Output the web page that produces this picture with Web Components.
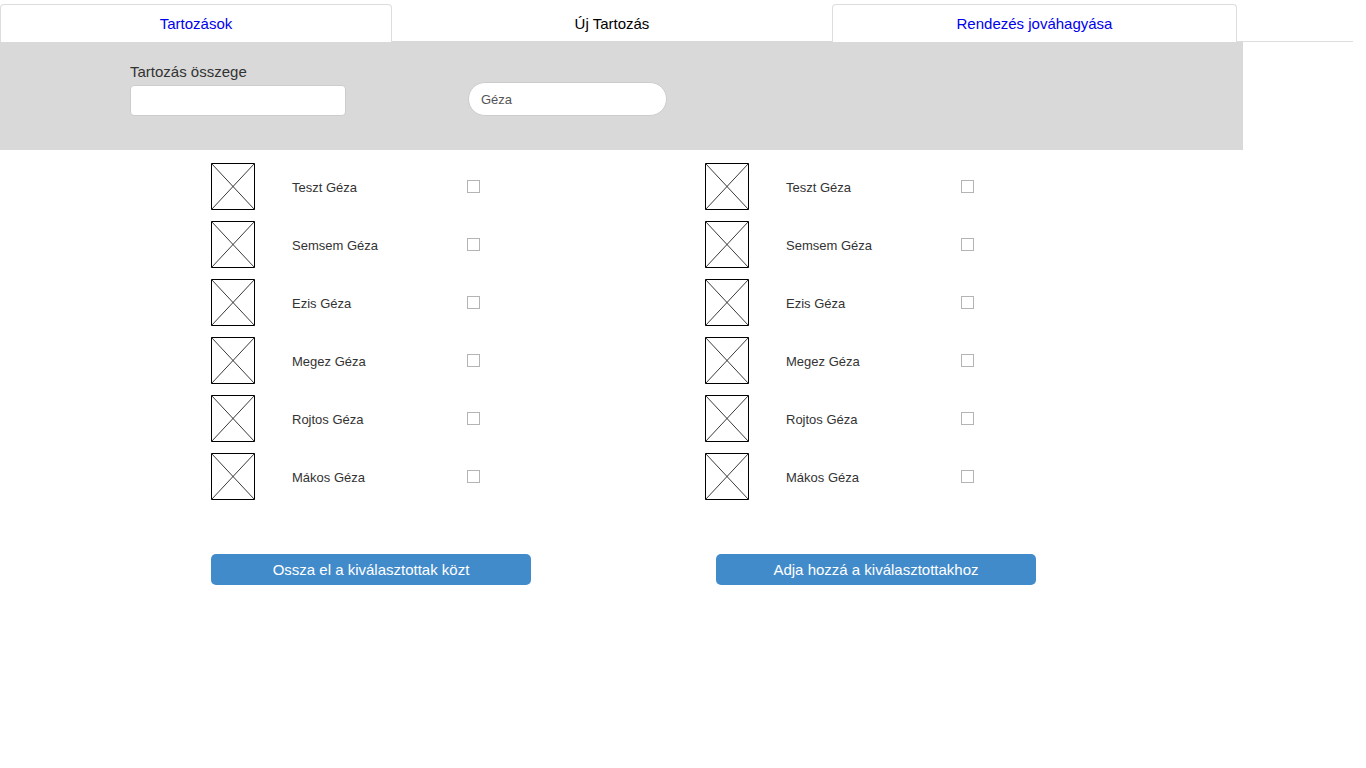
<!DOCTYPE html>
<html lang="hu">
<head>
<meta charset="utf-8">
<title>Új Tartozás</title>
<style>
  body {
    margin: 0;
    background: #fff;
    color: #333;
    font-family: "Liberation Sans", Arial, sans-serif;
    font-size: 15px;
    line-height: 18px;
  }
</style>
</head>
<body>
<debt-page></debt-page>
<script>
  function define(name, html, setup) {
    const template = document.createElement('template');
    template.innerHTML = html;
    customElements.define(name, class extends HTMLElement {
      connectedCallback() {
        if (this.shadowRoot) return;
        const root = this.attachShadow({ mode: 'open' });
        root.append(template.content.cloneNode(true));
        if (setup) setup(this, root);
      }
    });
  }

  define('nav-tab', `
    <style>
      :host { display: block; box-sizing: border-box; height: 38px; }
      :host(:not([current])) {
        border: 1px solid #ddd; border-bottom: 0;
        border-radius: 4px 4px 0 0; background: #fff;
      }
      :host([current]) { border-bottom: 1px solid #d9d9d9; padding-top: 1px; }
      a {
        display: block; padding: 10px 8px 9px; text-align: center;
        color: #00e; text-decoration: none;
      }
      :host([current]) a { color: #000; }
    </style>
    <a href="#"><slot></slot></a>`,
    (host, root) => {
      const link = root.querySelector('a');
      link.href = host.getAttribute('href');
      if (host.hasAttribute('current')) link.setAttribute('aria-current', 'page');
    });

  define('tab-bar', `
    <style>
      :host { display: block; padding: 4px 13px 0 0; }
      nav { display: grid; grid-template-columns: 392fr 440fr 405fr 116fr; }
      .rest { border-bottom: 1px solid #ddd; }
    </style>
    <nav><slot></slot><span class="rest"></span></nav>`);

  define('text-field', `
    <style>
      :host { display: block; width: 216px; }
      label { display: block; margin-bottom: 4px; }
      input {
        display: block; box-sizing: border-box; width: 100%; height: 31px;
        padding: 0 12px; border: 1px solid #ccc; border-radius: 4px;
        background: #fff; color: #333; font: inherit; outline: 0;
      }
    </style>
    <label for="field"><slot></slot></label>
    <input id="field" type="text">`);

  define('search-field', `
    <style>
      :host { display: block; width: 199px; }
      input {
        display: block; box-sizing: border-box; width: 100%; height: 34px;
        padding: 0 12px; border: 1px solid #ccc; border-radius: 17px;
        background: #fff; color: #555; font: inherit; font-size: 13px; outline: 0;
      }
    </style>
    <input type="text" aria-label="Keresés">`,
    (host, root) => { root.querySelector('input').value = host.getAttribute('value') || ''; });

  define('form-band', `
    <style>
      :host {
        display: flex; align-items: flex-end; gap: 122px;
        box-sizing: border-box; width: 91%; height: 108px;
        padding: 0 0 34px 130px; background: #d9d9d9;
      }
    </style>
    <slot></slot>`);

  define('image-placeholder', `
    <style>
      :host { display: block; width: 44px; height: 47px; }
      svg { display: block; }
    </style>
    <svg width="44" height="47" viewBox="0 0 44 47" fill="none" stroke="#000" aria-hidden="true">
      <path d="M.5.5h43v46H.5z"/>
      <path d="M.5.5l43 46M43.5.5l-43 46" stroke="#222" stroke-width=".9"/>
    </svg>`);

  define('person-row', `
    <style>
      :host {
        display: grid; grid-template-columns: 44px 138px 13px;
        column-gap: 37px; align-items: center; font-size: 13px;
      }
      label { padding-top: 2px; }
      input {
        appearance: none; box-sizing: border-box; width: 13px; height: 13px;
        margin: 0; border: 1px solid #b4b4b4; background: #fff;
      }
      input:checked { background: #428bca; }
    </style>
    <image-placeholder></image-placeholder>
    <label for="pick"><slot></slot></label>
    <input id="pick" type="checkbox">`);

  define('person-list', `
    <style>
      :host { display: grid; row-gap: 11px; justify-content: start; }
    </style>
    <slot></slot>`);

  define('action-button', `
    <style>
      :host { display: block; }
      button {
        display: block; width: 100%; height: 31px; padding: 0 12px;
        border: 0; border-radius: 5px; background: #428bca; color: #fff;
        font: inherit; cursor: pointer;
      }
    </style>
    <button type="button"><slot></slot></button>`);

  const people = ['Teszt Géza', 'Semsem Géza', 'Ezis Géza', 'Megez Géza', 'Rojtos Géza', 'Mákos Géza']
    .map(name => `<person-row>${name}</person-row>`).join('');

  define('debt-page', `
    <style>
      :host { display: block; }
      main { padding: 13px 16px 16px 211px; }
      .lists { display: grid; grid-template-columns: 269px 269px; column-gap: 225px; }
      .actions {
        display: grid; grid-template-columns: 320px 320px;
        column-gap: 185px; margin-top: 54px;
      }
    </style>
    <tab-bar>
      <nav-tab href="#tartozasok">Tartozások</nav-tab>
      <nav-tab href="#uj" current>Új Tartozás</nav-tab>
      <nav-tab href="#rendezes">Rendezés jováhagyása</nav-tab>
    </tab-bar>
    <form-band>
      <text-field>Tartozás összege</text-field>
      <search-field value="Géza"></search-field>
    </form-band>
    <main>
      <div class="lists">
        <person-list>${people}</person-list>
        <person-list>${people}</person-list>
      </div>
      <div class="actions">
        <action-button>Ossza el a kiválasztottak közt</action-button>
        <action-button>Adja hozzá a kiválasztottakhoz</action-button>
      </div>
    </main>`);
</script>
</body>
</html>
